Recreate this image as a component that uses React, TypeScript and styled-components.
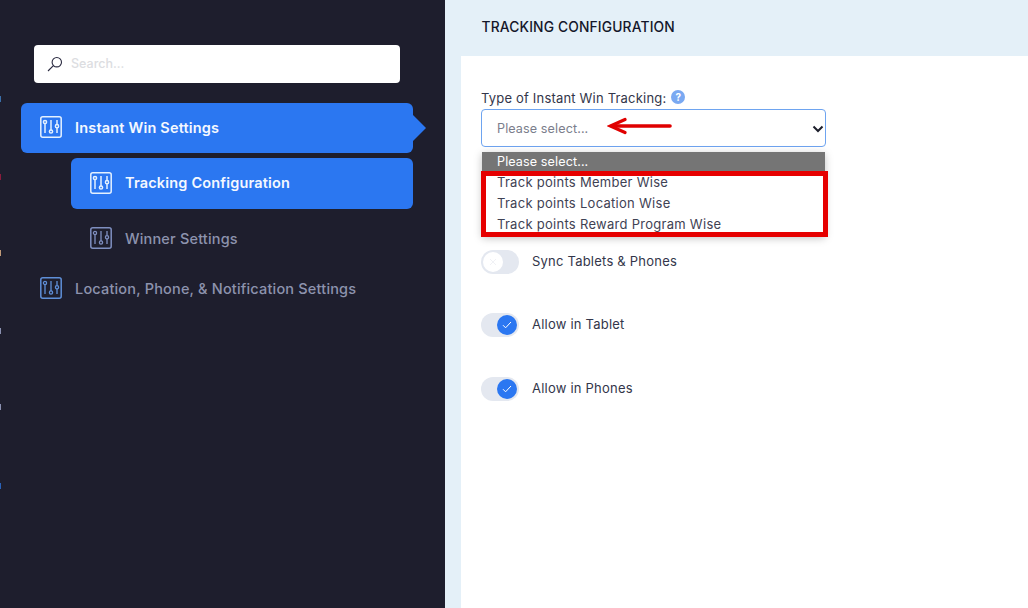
import React from "react";
import styled, { createGlobalStyle } from "styled-components";

const Global = createGlobalStyle`
  html, body { margin: 0; padding: 0; height: 100%; overflow: hidden; }
  #root { height: 100%; }
  * { box-sizing: border-box; }
  body { font-family: Inter, "Noto Sans", "Liberation Sans", sans-serif; }
`;

const Page = styled.div`
  display: flex;
  width: 1028px;
  height: 608px;
  background: #e4f0f8;
`;

const Sidebar = styled.aside`
  position: relative;
  width: 445px;
  height: 608px;
  flex: none;
  background: #1e1e2d;
  padding: 45px 32px 0 21px;
  display: flex;
  flex-direction: column;
`;

const EdgeMark = styled.i<{ $top: number; $color: string }>`
  position: absolute;
  left: 0;
  top: ${(p) => p.$top}px;
  width: 1px;
  height: 6px;
  background: ${(p) => p.$color};
`;

const SearchBox = styled.div`
  margin-left: 13px;
  width: 366px;
  height: 38px;
  flex: none;
  background: #fff;
  border-radius: 4px;
  display: flex;
  align-items: center;
  gap: 8px;
  padding: 0 0 0 13px;
  margin-bottom: 20px;
`;

const SearchText = styled.span`
  font-size: 12.5px;
  font-weight: 500;
  color: #dcdde1;
  margin-top: -2px;
`;

const NavItem = styled.div<{ $level: number; $active?: boolean; $height: number; $gap?: number }>`
  position: relative;
  flex: none;
  height: ${(p) => p.$height}px;
  margin-left: ${(p) => (p.$level === 1 ? 50 : 0)}px;
  margin-bottom: ${(p) => p.$gap ?? 5}px;
  padding: 0 0 2px 19px;
  display: flex;
  align-items: center;
  gap: 13px;
  border-radius: 6px;
  background: ${(p) => (p.$active ? "#2b77f1" : "transparent")};
  color: ${(p) => (p.$active ? "#f4f8ff" : "#8d93ad")};
  font-size: 14.5px;
  font-weight: ${(p) => (p.$active ? 600 : 500)};
  letter-spacing: 0.18px;
  svg { flex: none; }
`;

const Caret = styled.span`
  position: absolute;
  right: -13px;
  top: 12px;
  width: 0;
  height: 0;
  border-top: 13px solid transparent;
  border-bottom: 13px solid transparent;
  border-left: 13px solid #2b77f1;
`;

const Main = styled.main`
  flex: 1;
  display: flex;
  flex-direction: column;
  min-width: 0;
`;

const Header = styled.header`
  height: 56px;
  flex: none;
  padding: 0 0 2px 36.500px;
  display: flex;
  align-items: center;
  font-size: 13.8px;
  font-weight: 500;
  color: #14172a;
  letter-spacing: 0.16px;
`;

const Panel = styled.section`
  flex: 1;
  margin-left: 16px;
  background: #fff;
  padding: 33px 0 0 20px;
`;

const FieldLabel = styled.div`
  display: flex;
  align-items: center;
  gap: 5px;
  height: 20px;
  padding-bottom: 2px;
  font-size: 13px;
  color: #33364a;
  letter-spacing: 0.19px;
`;

const Help = styled.span`
  width: 14px;
  height: 14px;
  margin-top: -3px;
  border-radius: 50%;
  background: #7aa9f2;
  color: #fff;
  font-size: 10px;
  font-weight: 700;
  display: flex;
  align-items: center;
  justify-content: center;
`;

const SelectWrap = styled.div`
  position: relative;
  width: 345px;
  margin-bottom: 103px;
`;

const NativeSelect = styled.select`
  display: block;
  width: 100%;
  height: 38px;
  padding: 0 24px 0 15px;
  border: 1px solid #6ea4f0;
  border-radius: 4px;
  background: #fff;
  color: #7b7e8c;
  font-family: inherit;
  font-size: 12.6px;
  letter-spacing: 0.1px;
  outline: none;
  appearance: none;
`;

const Chevron = styled.svg`
  position: absolute;
  right: 2px;
  top: 16px;
  pointer-events: none;
`;

const ArrowMark = styled.svg`
  position: absolute;
  left: 126px;
  top: 8px;
  pointer-events: none;
`;

const OptionList = styled.ul`
  position: absolute;
  left: 1px;
  top: 43px;
  width: 343px;
  margin: 0;
  padding: 0;
  list-style: none;
  background: #fff;
  box-shadow: 0 2px 8px rgba(0, 0, 0, 0.25);
`;

const Option = styled.li<{ $selected?: boolean }>`
  height: 21px;
  padding: 0 0 ${(p) => (p.$selected ? 2 : 4)}px 15px;
  display: flex;
  align-items: center;
  font-size: ${(p) => (p.$selected ? 12.6 : 13)}px;
  letter-spacing: ${(p) => (p.$selected ? 0.1 : 0.28)}px;
  color: ${(p) => (p.$selected ? "#fff" : "#3f4254")};
  background: ${(p) => (p.$selected ? "#757575" : "#fff")};
`;

const Highlight = styled.div`
  position: absolute;
  left: 0;
  top: 62px;
  width: 347px;
  height: 66px;
  border: 5px solid #e60000;
`;

const ToggleRow = styled.div<{ $gap: number }>`
  display: flex;
  align-items: center;
  gap: 13px;
  height: 24px;
  margin-bottom: ${(p) => p.$gap}px;
  font-size: 13px;
  color: #33364a;
  letter-spacing: 0.22px;
`;

const ToggleLabel = styled.span`
  margin-top: -2px;
`;

const Track = styled.span<{ $on?: boolean }>`
  width: 38px;
  height: 24px;
  border-radius: 12px;
  background: #e4e8f0;
  padding: 2px;
  display: flex;
  justify-content: ${(p) => (p.$on ? "flex-end" : "flex-start")};
`;

const Knob = styled.span<{ $on?: boolean }>`
  width: 20px;
  height: 20px;
  border-radius: 50%;
  background: ${(p) => (p.$on ? "#2b77f1" : "#fff")};
  display: flex;
  align-items: center;
  justify-content: center;
`;

const SliderIcon = ({ color, weight = 1.3 }: { color: string; weight?: number }) => (
  <svg width="22" height="22" viewBox="0 0 22 22" fill="none" stroke={color} strokeWidth={weight}>
    <rect x="0.8" y="0.8" width="20.4" height="20.4" rx="2" strokeWidth="1.5" />
    <path d="M5 7.5V17M11 4v10M17 4v4.5M17 12v5" />
    <circle cx="5" cy="6" r="1.6" />
    <circle cx="11" cy="15.5" r="1.6" />
    <circle cx="17" cy="10.2" r="1.6" />
  </svg>
);

const Toggle = ({ on, label, gap }: { on?: boolean; label: string; gap: number }) => (
  <ToggleRow $gap={gap}>
    <Track $on={on}>
      <Knob $on={on}>
        {on ? (
          <svg width="10" height="8" viewBox="0 0 10 8" fill="none" stroke="#fff" strokeWidth="1">
            <path d="M1 4.2l2.6 2.6L9 1" />
          </svg>
        ) : (
          <svg width="8" height="8" viewBox="0 0 8 8" fill="none" stroke="#f0f1f5" strokeWidth="1">
            <path d="M1 1l6 6M7 1L1 7" />
          </svg>
        )}
      </Knob>
    </Track>
    <ToggleLabel>{label}</ToggleLabel>
  </ToggleRow>
);

const edgeMarks: [number, string][] = [
  [96, "#3a6ea8"],
  [174, "#8a1c3c"],
  [250, "#c09a78"],
  [328, "#8a90b0"],
  [404, "#8a90b0"],
  [483, "#2a62b8"],
];

export default function App() {
  return (
    <>
      <Global />
      <Page>
        <Sidebar>
          {edgeMarks.map(([top, color]) => (
            <EdgeMark key={top} $top={top} $color={color} />
          ))}
          <SearchBox>
            <svg width="16" height="16" viewBox="0 0 16 16" fill="none" stroke="#2a2a40" strokeWidth="1.1">
              <circle cx="9.8" cy="6.2" r="4.7" />
              <path d="M6.4 9.6L1 15" />
            </svg>
            <SearchText>Search...</SearchText>
          </SearchBox>
          <NavItem $level={0} $active $height={50}>
            <SliderIcon color="#e4f1ff" weight={1.5} />
            Instant Win Settings
            <Caret />
          </NavItem>
          <NavItem $level={1} $active $height={51}>
            <SliderIcon color="#e4f1ff" weight={1.5} />
            Tracking Configuration
          </NavItem>
          <NavItem $level={1} $height={50} $gap={0}>
            <SliderIcon color="#7f8fc0" />
            Winner Settings
          </NavItem>
          <NavItem $level={0} $height={50}>
            <SliderIcon color="#5f8fd8" />
            Location, Phone, &amp; Notification Settings
          </NavItem>
        </Sidebar>
        <Main>
          <Header>TRACKING CONFIGURATION</Header>
          <Panel>
            <FieldLabel>
              Type of Instant Win Tracking:
              <Help>?</Help>
            </FieldLabel>
            <SelectWrap>
              <NativeSelect defaultValue="">
                <option value="">Please select...</option>
              </NativeSelect>
              <Chevron width="12" height="8" viewBox="0 0 12 8" fill="none" stroke="#1d1f2c" strokeWidth="2">
                <path d="M1.500 1.500L6 6l4.500-4.500" />
              </Chevron>
              <ArrowMark width="66" height="18" viewBox="0 0 66 18" fill="none" stroke="#e00000" strokeLinecap="round">
                <path d="M5 9H63" strokeWidth="3.600" />
                <path d="M18 2.500L3.500 9l14.500 6.500" strokeWidth="3.200" />
              </ArrowMark>
              <OptionList>
                <Option $selected>Please select...</Option>
                <Option>Track points Member Wise</Option>
                <Option>Track points Location Wise</Option>
                <Option>Track points Reward Program Wise</Option>
              </OptionList>
              <Highlight />
            </SelectWrap>
            <Toggle label="Sync Tablets &amp; Phones" gap={39} />
            <Toggle on label="Allow in Tablet" gap={40} />
            <Toggle on label="Allow in Phones" gap={0} />
          </Panel>
        </Main>
      </Page>
    </>
  );
}
